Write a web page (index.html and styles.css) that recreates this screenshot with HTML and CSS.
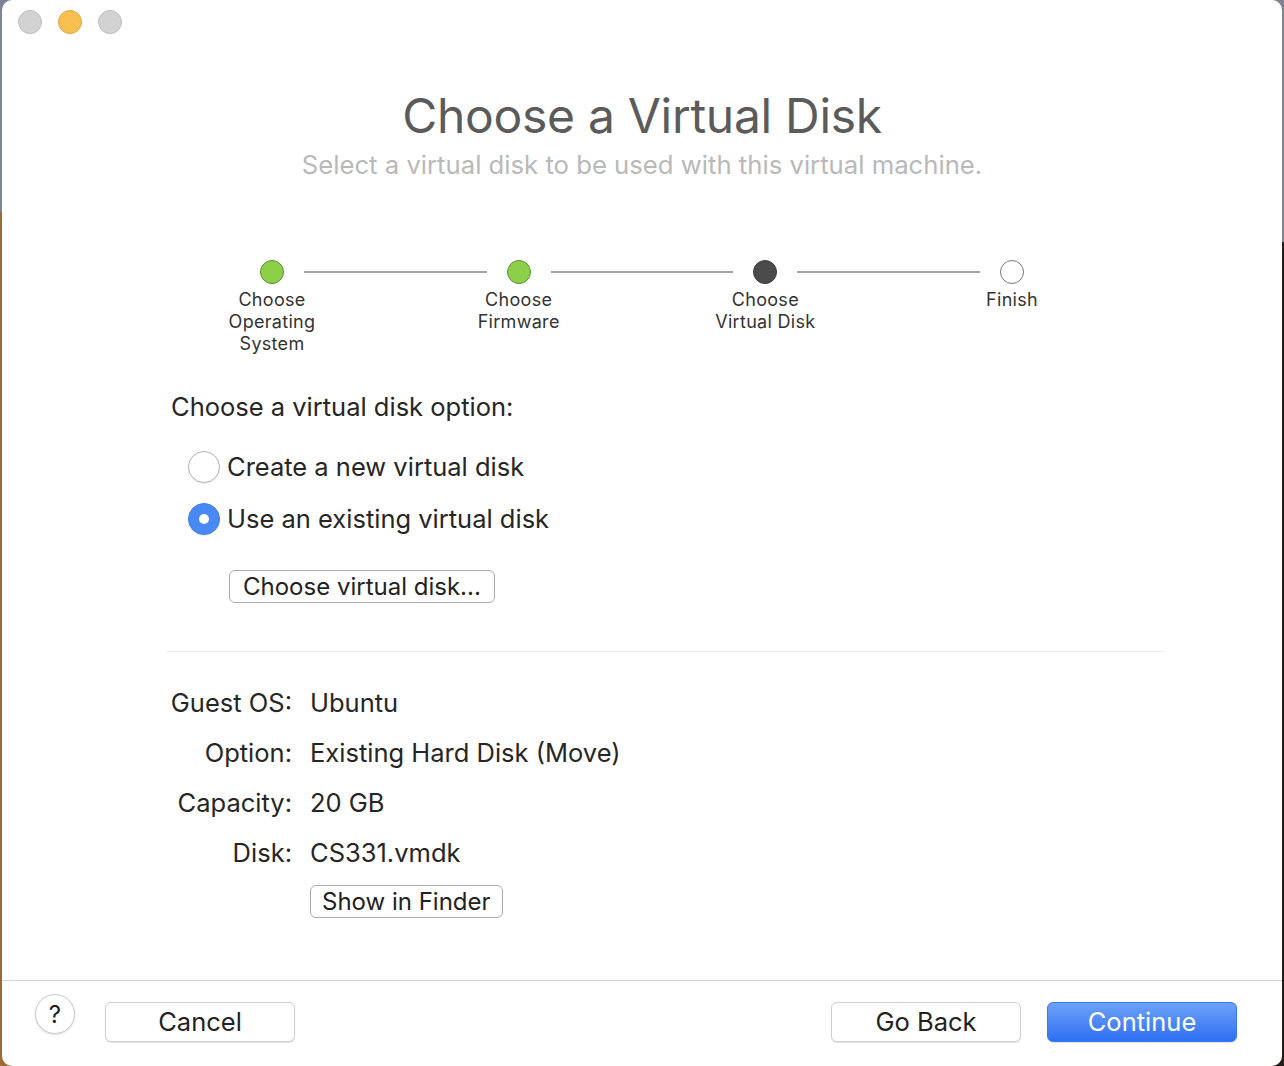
FILE: index.html
```html
<!DOCTYPE html>
<html>
<head>
<meta charset="utf-8">
<link rel="stylesheet" href="styles.css">
</head>
<body>
<div class="window">
  <div class="titlebar">
    <span class="light gray"></span>
    <span class="light yellow"></span>
    <span class="light gray"></span>
  </div>
  <div class="main">
    <h1 class="title">Choose a Virtual Disk</h1>
    <p class="subtitle">Select a virtual disk to be used with this virtual machine.</p>

    <div class="stepper">
      <div class="step"><span class="dot done"></span><span class="label">Choose<br>Operating<br>System</span></div>
      <div class="line"></div>
      <div class="step"><span class="dot done"></span><span class="label">Choose<br>Firmware</span></div>
      <div class="line"></div>
      <div class="step"><span class="dot current"></span><span class="label">Choose<br>Virtual Disk</span></div>
      <div class="line"></div>
      <div class="step"><span class="dot todo"></span><span class="label">Finish</span></div>
    </div>

    <div class="content">
      <div class="question">Choose a virtual disk option:</div>
      <div class="radios">
        <div class="radio-row"><span class="radio"></span><span>Create a new virtual disk</span></div>
        <div class="radio-row"><span class="radio checked"></span><span>Use an existing virtual disk</span></div>
      </div>
      <div class="choose-wrap"><button class="btn small">Choose virtual disk...</button></div>
      <div class="divider"></div>
      <div class="info">
        <span class="k">Guest OS:</span><span class="v">Ubuntu</span>
        <span class="k">Option:</span><span class="v">Existing Hard Disk (Move)</span>
        <span class="k">Capacity:</span><span class="v">20 GB</span>
        <span class="k">Disk:</span><span class="v">CS331.vmdk</span>
        <span class="k"></span><span class="v"><button class="btn small finder">Show in Finder</button></span>
      </div>
    </div>
  </div>
  <div class="footer">
    <button class="help">?</button>
    <button class="btn big">Cancel</button>
    <div class="spacer"></div>
    <button class="btn big">Go Back</button>
    <button class="btn big primary">Continue</button>
  </div>
</div>
</body>
</html>
```

FILE: styles.css
```css
* { box-sizing: border-box; }
html, body { height: 100%; }
body {
  margin: 0;
  font-family: "Inter", "Liberation Sans", sans-serif;
  color: #262626;
  background:
    linear-gradient(#7f8394 0 212px, #9c6b36 212px) left top / 50% 100% no-repeat,
    linear-gradient(#7f8394 0 242px, #231c18 242px) right top / 50% 100% no-repeat;
  overflow: hidden;
}
.window {
  margin-left: 2px;
  width: 1280px;
  height: 1066px;
  background: #fff;
  border-radius: 10px;
  display: flex;
  flex-direction: column;
}
.titlebar {
  height: 44px;
  display: flex;
  align-items: center;
  gap: 16px;
  padding-left: 16px;
}
.light {
  width: 24px; height: 24px; border-radius: 50%;
  display: inline-block;
}
.light.gray { background: #d2d2d2; border: 1px solid #bdbdbd; }
.light.yellow { background: #f7c050; border: 1px solid #dfa73f; }
.main { flex: 1; display: flex; flex-direction: column; }
.title {
  margin: 42px 0 0;
  text-align: center;
  font-weight: 400;
  font-size: 48px;
  line-height: 60px;
  color: #5b5b5b;
  letter-spacing: -0.3px;
}
.subtitle {
  margin: 4px 0 0;
  text-align: center;
  font-size: 25.7px;
  line-height: 30px;
  color: #b9b9b9;
}
.stepper {
  margin: 80px auto 0;
  width: 764px;
  display: flex;
  align-items: flex-start;
}
.step {
  width: 24px;
  display: flex;
  flex-direction: column;
  align-items: center;
}
.dot {
  width: 24px; height: 24px; border-radius: 50%;
  display: block;
}
.dot.done { background: #8cd04a; border: 1px solid #5f8f35; }
.dot.current { background: #4b4b4b; border: 1px solid #3c3c3c; }
.dot.todo { background: #fff; border: 1px solid #7a7a7a; }
.label {
  margin-top: 5px;
  white-space: nowrap;
  text-align: center;
  font-size: 18px;
  letter-spacing: 0.3px;
  line-height: 22px;
  color: #333;
}
.line {
  flex: 1;
  height: 2px;
  background: #a3a3a3;
  margin: 11px 20px 0;
}
.content {
  margin-left: 164px;
  width: 1000px;
}
.question {
  margin-top: 37px;
  padding-left: 5px;
  font-size: 25.5px;
  line-height: 30px;
}
.radios {
  margin-top: 29px;
  padding-left: 22px;
  display: flex;
  flex-direction: column;
  gap: 20px;
}
.radio-row {
  display: flex;
  align-items: center;
  gap: 7px;
  font-size: 25.5px;
  line-height: 30px;
}
.radio {
  width: 32px; height: 32px; border-radius: 50%;
  border: 1px solid #b5b5b5;
  background: #fff;
  box-shadow: 0 1px 1px rgba(0,0,0,0.08);
  display: inline-block;
  position: relative;
}
.radio.checked {
  background: #4a89f3;
  border-color: #3f7ee8;
}
.radio.checked::after {
  content: "";
  position: absolute;
  left: 50%; top: 50%;
  width: 10px; height: 10px;
  margin: -5px 0 0 -5px;
  border-radius: 50%;
  background: #fff;
}
.choose-wrap { margin-top: 35px; padding-left: 63px; }
.btn {
  font-family: inherit;
  background: #fff;
  color: #222;
  border: 1px solid #b3b3b3;
  border-radius: 6px;
  padding: 0;
  cursor: default;
}
.btn.small {
  height: 33px;
  font-size: 24px;
  line-height: 31px;
  padding: 0 13px;
  border-width: 1.5px;
  border-color: #ababab;
}
.btn.small.finder { padding: 0 11px; }
.divider {
  margin-top: 48px;
  height: 1px;
  background: #eeeeee;
}
.info {
  margin-top: 36px;
  display: grid;
  grid-template-columns: 126px auto;
  column-gap: 18px;
  grid-auto-rows: 50px;
  font-size: 25.5px;
  line-height: 30px;
  justify-content: start;
}
.info .k { text-align: right; }
.info .finder { display: block; margin-top: -3px; }
.footer {
  height: 86px;
  border-top: 1px solid #d3d3d3;
  display: flex;
  align-items: flex-start;
  padding: 21px 45px 0 33px;
}
.help {
  width: 40px; height: 40px; border-radius: 50%;
  border: 1px solid #c9c9c9;
  background: #fff;
  box-shadow: 0 1px 2px rgba(0,0,0,0.12);
  font-family: inherit;
  font-size: 24px;
  color: #222;
  padding: 0;
  margin-top: -8px;
}
.btn.big {
  width: 190px;
  height: 40px;
  font-size: 25.5px;
  line-height: 38px;
  border-color: #cfcfcf;
  box-shadow: 0 1px 1px rgba(0,0,0,0.12);
}
.footer .help + .btn { margin-left: 30px; }
.spacer { flex: 1; }
.btn.big + .btn.big { margin-left: 26px; }
.btn.primary {
  background: linear-gradient(#6da2f6, #2f6ff2);
  border-color: #3a78ee;
  color: #fff;
}
```
